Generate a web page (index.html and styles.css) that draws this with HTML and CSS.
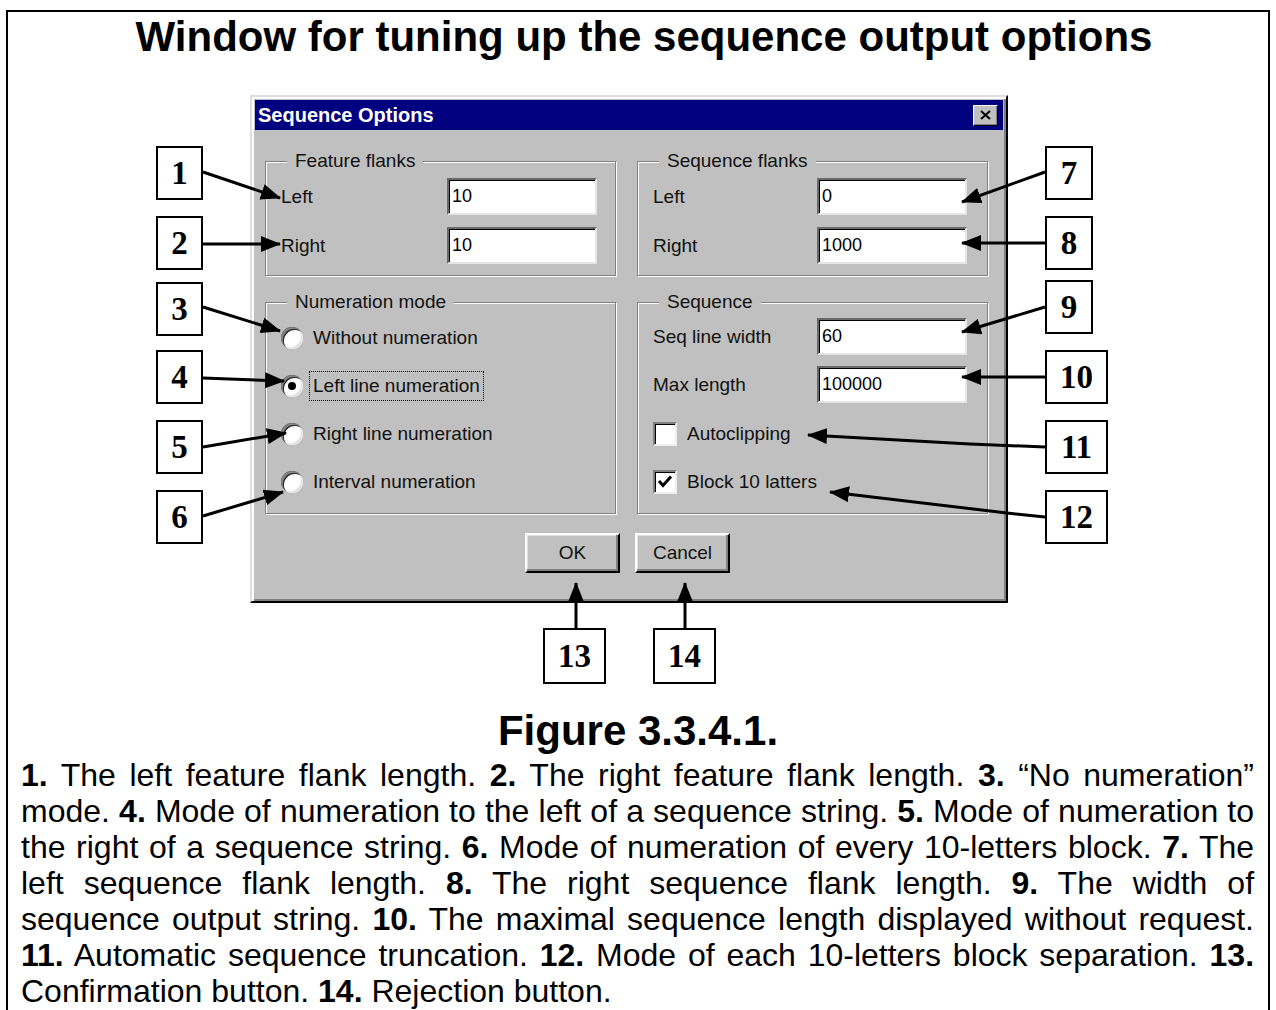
FILE: index.html
```html
<!DOCTYPE html>
<html>
<head>
<meta charset="utf-8">
<title>Sequence Options</title>
<link rel="stylesheet" href="styles.css">
</head>
<body>
<div class="page">
  <h1 class="title">Window for tuning up the sequence output options</h1>

  <div class="dialog">
    <div class="titlebar">
      <span class="caption-text">Sequence Options</span>
      <span class="close"><svg width="11" height="10" viewBox="0 0 11 10"><path d="M1 1 L10 9 M10 1 L1 9" stroke="#000" stroke-width="2"/></svg></span>
    </div>
    <div class="dlg-body">
      <div class="groups">
        <fieldset class="group">
          <legend>Feature flanks</legend>
          <div class="rows flank-rows">
            <div class="field"><span class="lbl">Left</span><span class="input">10</span></div>
            <div class="field"><span class="lbl">Right</span><span class="input">10</span></div>
          </div>
        </fieldset>
        <fieldset class="group right">
          <legend>Sequence flanks</legend>
          <div class="rows flank-rows">
            <div class="field"><span class="lbl">Left</span><span class="input">0</span></div>
            <div class="field"><span class="lbl">Right</span><span class="input">1000</span></div>
          </div>
        </fieldset>
        <fieldset class="group">
          <legend>Numeration mode</legend>
          <div class="rows radio-rows">
            <div class="opt"><span class="radio"></span><span>Without numeration</span></div>
            <div class="opt"><span class="radio checked"></span><span class="focus">Left line numeration</span></div>
            <div class="opt"><span class="radio"></span><span>Right line numeration</span></div>
            <div class="opt"><span class="radio"></span><span>Interval numeration</span></div>
          </div>
        </fieldset>
        <fieldset class="group right">
          <legend>Sequence</legend>
          <div class="rows seq-rows">
            <div class="field"><span class="lbl">Seq line width</span><span class="input">60</span></div>
            <div class="field second"><span class="lbl">Max length</span><span class="input">100000</span></div>
            <div class="opt first-check"><span class="check"></span><span>Autoclipping</span></div>
            <div class="opt"><span class="check"><svg width="20" height="20" viewBox="0 0 20 20"><path d="M4 9 L8 13.5 L16 4.5" fill="none" stroke="#000" stroke-width="3"/></svg></span><span>Block 10 latters</span></div>
          </div>
        </fieldset>
      </div>
      <div class="buttons">
        <span class="btn">OK</span>
        <span class="btn">Cancel</span>
      </div>
    </div>
  </div>

  <div class="figcap">Figure 3.3.4.1.</div>

  <p class="desc">
    <span class="ln"><b>1.</b> The left feature flank length. <b>2.</b> The right feature flank length. <b>3.</b> “No numeration”</span>
    <span class="ln">mode. <b>4.</b> Mode of numeration to the left of a sequence string. <b>5.</b> Mode of numeration to</span>
    <span class="ln">the right of a sequence string. <b>6.</b> Mode of numeration of every 10-letters block. <b>7.</b> The</span>
    <span class="ln">left sequence flank length. <b>8.</b> The right sequence flank length. <b>9.</b> The width of</span>
    <span class="ln">sequence output string. <b>10.</b> The maximal sequence length displayed without request.</span>
    <span class="ln"><b>11.</b> Automatic sequence truncation. <b>12.</b> Mode of each 10-letters block separation. <b>13.</b></span>
    <span class="ln last">Confirmation button. <b>14.</b> Rejection button.</span>
  </p>
</div>

<div class="overlay">
  <svg class="arrows" width="1276" height="1010" viewBox="0 0 1276 1010">
    <defs>
      <marker id="ah" markerUnits="userSpaceOnUse" markerWidth="20" markerHeight="16" refX="19" refY="8" orient="auto">
        <path d="M0 0 L20 8 L0 16 Z" fill="#000"/>
      </marker>
    </defs>
    <g stroke="#000" stroke-width="3" fill="none" marker-end="url(#ah)">
      <path d="M203 172 L280 198"/>
      <path d="M203 244 L280 244"/>
      <path d="M203 307 L280 331"/>
      <path d="M203 378 L284 381"/>
      <path d="M203 447 L286 433"/>
      <path d="M203 516 L283 492"/>
      <path d="M1045 172 L962 202"/>
      <path d="M1045 243 L962 243"/>
      <path d="M1045 307 L962 332"/>
      <path d="M1045 377 L962 377"/>
      <path d="M1045 447 L970 444 L808 435"/>
      <path d="M1045 517 L1007 513 L830 492"/>
      <path d="M576 628 L576 583"/>
      <path d="M685 628 L685 583"/>
    </g>
  </svg>
  <div class="callout n1">1</div>
  <div class="callout n2">2</div>
  <div class="callout n3">3</div>
  <div class="callout n4">4</div>
  <div class="callout n5">5</div>
  <div class="callout n6">6</div>
  <div class="callout n7">7</div>
  <div class="callout n8">8</div>
  <div class="callout n9">9</div>
  <div class="callout wide n10">10</div>
  <div class="callout wide n11">11</div>
  <div class="callout wide n12">12</div>
  <div class="callout wide n13">13</div>
  <div class="callout wide n14">14</div>
</div>
</body>
</html>
```

FILE: styles.css
```css
html, body {
  margin: 0;
  padding: 0;
  overflow: hidden;
  background: #fff;
}

body {
  position: relative;
  width: 1276px;
  height: 1010px;
  font-family: "Liberation Sans", Arial, sans-serif;
  color: #000;
}

.page {
  margin: 10px 6px 0 6px;
  border: 2px solid #000;
  border-bottom: none;
  height: 1000px;
  box-sizing: border-box;
}

.title {
  margin: 0;
  padding: 1px 0 0 12px;
  font-size: 42px;
  line-height: 48px;
  font-weight: bold;
  text-align: center;
}

/* ---------- dialog ---------- */
.dialog {
  margin: 34px 0 0 242px;
  width: 758px;
  height: 508px;
  box-sizing: border-box;
  background: #c0c0c0;
  border: 2px solid;
  border-color: #dfdfdf #000 #000 #dfdfdf;
  box-shadow: inset 2px 2px 0 #fff, inset -2px -2px 0 #808080;
  padding: 3px;
  font-size: 19px;
  color: #111;
}

.titlebar {
  height: 30px;
  background: #000080;
  color: #fff;
  display: flex;
  align-items: center;
  justify-content: space-between;
  padding: 0 5px 0 3px;
  font-weight: bold;
  font-size: 20px;
}

.close {
  width: 25px;
  height: 21px;
  box-sizing: border-box;
  background: #c0c0c0;
  border: 1px solid;
  border-color: #fff #000 #000 #fff;
  box-shadow: inset -1px -1px 0 #808080;
  display: flex;
  align-items: center;
  justify-content: center;
}

.close svg { display: block; }

.dlg-body {
  padding: 21px 0 0 10px;
}

.groups {
  display: grid;
  grid-template-columns: 351px 351px;
  grid-template-rows: 125px 222px;
  column-gap: 21px;
  row-gap: 16px;
}

.group {
  margin: 0;
  padding: 0 14px 0 15px;
  border: 1px solid #808080;
  box-shadow: 1px 1px 0 #fff, inset 1px 1px 0 #fff;
  min-width: 0;
  box-sizing: border-box;
}

.group legend {
  margin-left: 6px;
  padding: 0 8px;
  line-height: 20px;
  background: #c0c0c0;
}

.rows {
  display: flex;
  flex-direction: column;
}

.flank-rows {
  padding-top: 7px;
  gap: 12px;
}

.field {
  display: flex;
  align-items: center;
  height: 37px;
}

.lbl {
  width: 166px;
  flex: none;
}

.right .lbl { width: 164px; }

.input {
  width: 150px;
  height: 37px;
  box-sizing: border-box;
  background: #fff;
  border: 2px solid;
  border-color: #6a6a6a #e6e6e6 #e6e6e6 #6a6a6a;
  box-shadow: inset 1px 1px 0 #000;
  padding: 0 0 0 3px;
  display: flex;
  align-items: center;
  font-size: 18px;
  color: #000;
}

.radio-rows { padding-top: 2px; }

.opt {
  height: 48px;
  display: flex;
  align-items: center;
}

.radio {
  position: relative;
  flex: none;
  width: 22px;
  height: 22px;
  margin-right: 10px;
  border-radius: 50%;
  background: #fff;
  box-shadow: inset 2px 2px 0 #808080, inset 3px 3px 0 #222, inset -2px -2px 0 #e4e4e4;
}

.radio.checked::after {
  content: "";
  position: absolute;
  left: 7px;
  top: 7px;
  width: 8px;
  height: 8px;
  border-radius: 50%;
  background: #000;
}

.focus {
  outline: 1px dotted #000;
  outline-offset: 3px;
}

.seq-rows { padding-top: 6px; }
.seq-rows .second { margin-top: 11px; }
.seq-rows .first-check { margin-top: 7px; }

.check {
  flex: none;
  width: 24px;
  height: 24px;
  margin-right: 10px;
  box-sizing: border-box;
  background: #fff;
  border: 2px solid;
  border-color: #808080 #eee #eee #808080;
  box-shadow: inset 1px 1px 0 #000;
  display: flex;
  align-items: center;
  justify-content: center;
}

.check svg { display: block; }

.buttons {
  display: flex;
  justify-content: center;
  gap: 15px;
  margin-top: 19px;
  padding-right: 13px;
}

.btn {
  width: 95px;
  height: 40px;
  box-sizing: border-box;
  border: 2px solid;
  border-color: #fff #000 #000 #fff;
  box-shadow: inset -2px -2px 0 #808080, inset 1px 1px 0 #dfdfdf;
  display: flex;
  align-items: center;
  justify-content: center;
  font-size: 19px;
}

/* ---------- caption & text ---------- */
.figcap {
  margin-top: 105px;
  font-size: 42px;
  line-height: 46px;
  font-weight: bold;
  text-align: center;
}

.desc {
  margin: 3px 0 0;
  padding: 0 14px 0 13px;
  font-size: 32px;
  line-height: 36px;
}

.ln {
  display: block;
  text-align: justify;
  text-align-last: justify;
}

.ln.last { text-align-last: left; }

/* ---------- callouts ---------- */
.overlay {
  position: absolute;
  left: 0;
  top: 0;
  width: 1276px;
  height: 1010px;
  pointer-events: none;
}

.arrows {
  position: absolute;
  left: 0;
  top: 0;
}

.callout {
  position: absolute;
  box-sizing: border-box;
  width: 47px;
  height: 54px;
  border: 2px solid #000;
  background: #fff;
  display: flex;
  align-items: center;
  justify-content: center;
  font-family: "Liberation Serif", "Times New Roman", serif;
  font-weight: bold;
  font-size: 33px;
}

.callout.wide { width: 63px; }

.n1 { left: 156px; top: 146px; }
.n2 { left: 156px; top: 216px; }
.n3 { left: 156px; top: 282px; }
.n4 { left: 156px; top: 350px; }
.n5 { left: 156px; top: 420px; }
.n6 { left: 156px; top: 490px; }
.n7 { left: 1045px; top: 146px; width: 48px; }
.n8 { left: 1045px; top: 216px; width: 48px; }
.n9 { left: 1045px; top: 280px; width: 48px; }
.n10 { left: 1045px; top: 350px; }
.n11 { left: 1045px; top: 420px; }
.n12 { left: 1045px; top: 490px; }
.n13 { left: 543px; top: 628px; width: 64px; height: 56px; }
.n14 { left: 653px; top: 628px; height: 56px; }
```
